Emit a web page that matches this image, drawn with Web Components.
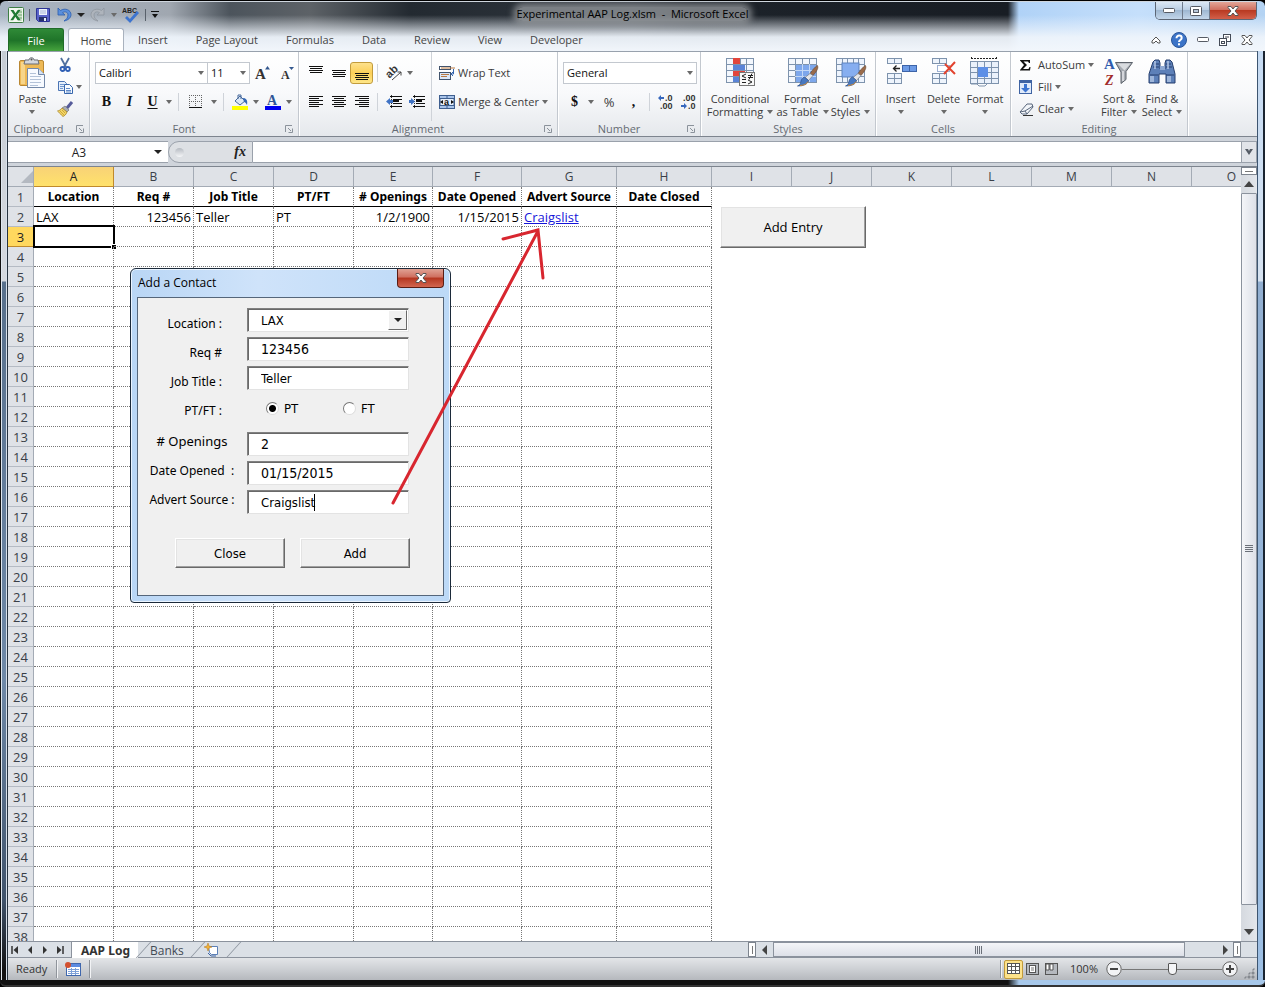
<!DOCTYPE html>
<html lang="en">
<head>
<meta charset="utf-8">
<title>Experimental AAP Log.xlsm - Microsoft Excel</title>
<style>
  html, body { margin: 0; height: 100%; overflow: hidden; background: #000; }
  body { font: 11px/14px "Open Sans", "Noto Sans", sans-serif; color: #3b3b3b; }
</style>
</head>
<body>
<excel-window></excel-window>
<script>
const BASE = `
  *, *::before, *::after { box-sizing: border-box; }
  :host { display: block; }
  :host([hidden]) { display: none; }
  button, input, select { font: inherit; color: inherit; margin: 0; padding: 0; border: 0; background: none; outline: 0; border-radius: 0; appearance: none; }
  button { display: inline-flex; align-items: center; justify-content: center; white-space: nowrap; }
`;
function define(name, css, html) {
  customElements.define(name, class extends HTMLElement {
    constructor() {
      super();
      this.attachShadow({ mode: 'open' });
    }
    connectedCallback() {
      if (this.shadowRoot.childNodes.length) return;
      const t = document.createElement('template');
      t.innerHTML = `<style>${BASE}${css}</style>${typeof html === 'function' ? html(this) : html}`;
      this.shadowRoot.append(t.content.cloneNode(true));
    }
  });
}

/* ---------- icons: [width, height, svg body] ---------- */
const lines = (arr) => arr.map(([x, y, w]) => `<rect x="${x}" y="${y}" width="${w}" height="1" fill="#111"/>`).join('');
const cells = (x, y, w, h, c, r, fill = '#eef4fc', stroke = '#7e93ad') => {
  let s = `<rect x="${x + .5}" y="${y + .5}" width="${w}" height="${h}" fill="${fill}" stroke="${stroke}"/>`;
  for (let i = 1; i < c; i++) s += `<path d="M${x + .5 + Math.round(i * w / c)} ${y}v${h}" stroke="${stroke}"/>`;
  for (let i = 1; i < r; i++) s += `<path d="M${x} ${y + .5 + Math.round(i * h / r)}h${w}" stroke="${stroke}"/>`;
  return s;
};
const BRUSH = `<path d="M30.500 8.500c1 2 0 4-2 7l-2.500 3-3-2 3-4c2-2 3-3.500 4.500-4z" fill="#9b6b4a" stroke="#5f4634" stroke-width=".6"/><path d="M23 16.500l3 2-4.500 5-3.500-3z" fill="#e4e6ea" stroke="#777c85" stroke-width=".7"/><path d="M17.500 20l4 3.500c-1 4-5 5.500-11 5.500 3-1 3-3 3.500-5 .5-2 2-3.500 3.500-4z" fill="#4878c0" stroke="#2c4f8a" stroke-width=".7"/><path d="M13 28.500c4-.3 7-1.500 8-4" stroke="#c98a3c" fill="none"/>`;
const ICONS = {
  excel: [16, 16, `<rect x=".5" y=".5" width="15" height="15" rx="1" fill="#f3f8f0" stroke="#3e7f45"/><rect x="10" y="2" width="4" height="12" fill="#cfe3cc"/><path d="M10 5h4M10 8h4M10 11h4" stroke="#6ea56f"/><path d="M2.500 3h3l2 3.300L9.700 3h2.800L9 8l3.700 5.200H9.600L7.400 9.700l-2.200 3.500H2.300L6 8z" fill="#1f7a33"/>`],
  save: [16, 16, `<path d="M1.500 1.500h13v13h-11l-2-2z" fill="#5a63c8" stroke="#2d3596"/><rect x="4" y="2" width="8" height="6" fill="#eef2fb"/><path d="M5 4h6M5 6h6" stroke="#a9b4d6"/><rect x="4" y="10" width="8" height="4" fill="#27306b"/><rect x="9" y="11" width="2" height="3" fill="#e8ecf8"/>`],
  undo: [16, 16, `<path d="M2 1v7h7L6.500 5.700C9 4 12 5 12 8c0 3-2 4.500-4 6 4-.8 7-3 7-6.500C15 3 9 .500 4.500 3.500z" fill="#5a8fdc" stroke="#2a5cae" stroke-width=".8"/>`],
  redo: [16, 16, `<path d="M14 1v7H7l2.500-2.300C7 4 4 5 4 8c0 3 2 4.500 4 6-4-.8-7-3-7-6.500C1 3 7 .500 11.500 3.500z" fill="#aeb4bc" stroke="#8e959e" stroke-width=".8"/>`],
  spell: [18, 18, `<text x="0" y="7" font-size="7" font-weight="bold" font-family="Liberation Sans" fill="#222">ABC</text><path d="M4 11l4 4 8-9" fill="none" stroke="#3d74cf" stroke-width="2.800"/>`],
  custom: [8, 8, `<path d="M0 .5h8" stroke="#111"/><path d="M1 3h6L4 7z" fill="#111"/>`],
  down: [6, 4, `<path d="M0 0h6L3 4z" fill="#6a6a6a"/>`],
  downBlack: [8, 4, `<path d="M0 0h8L4 4z" fill="#222"/>`],
  launcher: [8, 8, `<path d="M.5 7V.5H7" fill="none" stroke="#8b929b"/><path d="M3 3l3 3M7.500 3.500v4h-4" fill="none" stroke="#8b929b"/>`],
  paste: [32, 32, `<rect x="2.500" y="3.500" width="24" height="25" rx="1.500" fill="#eeb955" stroke="#b98732"/><rect x="4" y="5" width="4" height="22" fill="#f7d58a"/><path d="M8 3h4c0-3 5-3 5 0h4l1 4H7z" fill="#d5d8dd" stroke="#686d75"/><circle cx="14.500" cy="2.500" r="1" fill="#555"/><path d="M10.500 11.500h11l6 6v13h-17z" fill="#f7faff" stroke="#7388a8"/><path d="M21.500 11.500v6h6" fill="#d6e2f2" stroke="#7388a8"/><path d="M13 16.500h6M13 19.500h11M13 22.500h11M13 25.500h11M13 28.500h8" stroke="#b3c2d8"/>`],
  cut: [16, 16, `<path d="M4 1l5 9M12 1L7 10" stroke="#50709f" stroke-width="1.800"/><circle cx="5.500" cy="12" r="2" fill="none" stroke="#2f5fb4" stroke-width="1.800"/><circle cx="10.800" cy="12" r="2" fill="none" stroke="#2f5fb4" stroke-width="1.800"/>`],
  copy: [16, 16, `<path d="M1.500 2.500h6l2 2v7h-8z" fill="#e4eefb" stroke="#4a74b4"/><path d="M3 5.500h4M3 7.500h4M3 9.500h3" stroke="#6f96cf"/><path d="M7.500 5.500h5l3 3v6h-8z" fill="#f6faff" stroke="#3766ad"/><path d="M9 9.500h4M9 11.500h5M9 13h5" stroke="#5f89c8"/>`],
  painter: [16, 16, `<path d="M15 1l-5 6" stroke="#555b9a" stroke-width="3"/><path d="M8 5l4 4-2 2-5-4z" fill="#a8adb6" stroke="#666" stroke-width=".6"/><path d="M5 7l5 4c-1 3-3 4-4 4.500C4 14 2 11 .500 10 2 9.500 4 9 5 7z" fill="#f3d565" stroke="#a88728" stroke-width=".8"/><path d="M3 10l4 4M5 9l3 3" stroke="#b9942f" stroke-width=".7"/>`],
  grow: [16, 16, `<text x="0" y="14" font-size="15" font-weight="bold" font-family="Liberation Serif" fill="#333">A</text><path d="M10 4.500h5L12.500 1z" fill="#34588f"/>`],
  shrink: [14, 16, `<text x="0" y="14" font-size="12" font-weight="bold" font-family="Liberation Serif" fill="#333">A</text><path d="M8 2h5L10.500 5z" fill="#34588f"/>`],
  borders: [14, 14, `<path d="M.5 0v12M6.500 0v12M12.500 0v12M0 .5h13M0 6.500h13" stroke="#666" stroke-dasharray="1 1"/><path d="M0 12.500h13" stroke="#111"/>`],
  fill: [16, 16, `<path d="M3 7l5-5 5 5-5 4z" fill="#dce8f6" stroke="#47699b"/><path d="M6 5V1h3v4" fill="none" stroke="#47699b"/><path d="M11 4c3 0 5 2 4 7-1-2-2-3-3-3z" fill="#3769b5"/><rect x="0" y="12" width="16" height="4" fill="#ffff00"/>`],
  fontcolor: [16, 16, `<text x="2" y="11" font-size="14" font-weight="bold" font-family="Liberation Serif" fill="#2f5597">A</text><rect x="0" y="12" width="16" height="4" fill="#0000f0"/>`],
  atop: [14, 14, lines([[0, 0, 14], [1, 2, 12], [0, 4, 14], [1, 6, 12]])],
  amid: [14, 14, lines([[0, 4, 14], [1, 6, 12], [0, 8, 14], [1, 10, 12]])],
  abot: [14, 14, lines([[0, 7, 14], [1, 9, 12], [0, 11, 14], [1, 13, 12]])],
  aleft: [14, 14, lines([[0, 1, 14], [0, 3, 10], [0, 5, 14], [0, 7, 10], [0, 9, 14], [0, 11, 10]])],
  acenter: [14, 14, lines([[0, 1, 14], [2, 3, 10], [0, 5, 14], [2, 7, 10], [0, 9, 14], [2, 11, 10]])],
  aright: [14, 14, lines([[0, 1, 14], [4, 3, 10], [0, 5, 14], [4, 7, 10], [0, 9, 14], [4, 11, 10]])],
  orient: [18, 16, `<text x="1" y="11" transform="rotate(-45 6 8)" font-size="11" font-weight="bold" font-family="Liberation Sans" fill="#333">ab</text><path d="M7 15l9-8M12.500 7H16v3.500" fill="none" stroke="#444"/>`],
  outdent: [16, 14, lines([[4, 1, 12], [7, 4, 9], [7, 6, 6], [7, 8, 9], [4, 11, 12]]) + `<rect x="7" y="5" width="6" height="2" fill="#111"/><path d="M5.500 0v14" stroke="#333" stroke-dasharray="1 1"/><path d="M0 6.500L4 3v2h3v3H4v2z" fill="#3f72c4"/>`],
  indent: [16, 14, lines([[4, 1, 12], [7, 4, 9], [7, 6, 6], [7, 8, 9], [4, 11, 12]]) + `<rect x="7" y="5" width="6" height="2" fill="#111"/><path d="M5.500 0v14" stroke="#333" stroke-dasharray="1 1"/><path d="M6 6.500L2 3v2H0v3h2v2z" fill="#3f72c4"/>`],
  wrap: [16, 16, `<rect x=".5" y="1.500" width="11" height="3" fill="#fff" stroke="#41536c"/><path d="M2 3h14" stroke="#bb7a43"/><rect x=".5" y="7.500" width="11" height="7" fill="#dbe7f8" stroke="#41536c"/><path d="M2 9.500h8M2 11.500h6" stroke="#bb7a43"/><path d="M14.500 4v5h-2M14 7l-2 2 2 2" fill="none" stroke="#3464ad"/>`],
  merge: [16, 16, `<rect x=".5" y="1.500" width="15" height="13" fill="#a9c4ea" stroke="#3f5f8f"/><path d="M8 1v3M8 12v3" stroke="#3f5f8f"/><rect x="1" y="4.500" width="14" height="7" fill="#e6effb" stroke="#3f5f8f"/><path d="M1 8l3-2v4zM15 8l-3-2v4z" fill="#111"/><text x="5" y="11" font-size="9" font-weight="bold" font-family="Liberation Sans" fill="#111">a</text>`],
  incdec: [16, 16, `<text x="7" y="7" font-size="9" font-weight="bold" font-family="Liberation Sans" fill="#333">.0</text><text x="2" y="15" font-size="9" font-weight="bold" font-family="Liberation Sans" fill="#333">.00</text><path d="M0 4l3-3v2h3v2H3v2z" fill="#3768bd"/>`],
  decdec: [16, 16, `<text x="2" y="7" font-size="9" font-weight="bold" font-family="Liberation Sans" fill="#333">.00</text><text x="7" y="15" font-size="9" font-weight="bold" font-family="Liberation Sans" fill="#333">.0</text><path d="M6 12L3 9v2H0v2h3v2z" fill="#3768bd"/>`],
  condfmt: [32, 32, cells(2, 1, 27, 24, 4, 4, '#f3f7fd') + `<rect x="9" y="1" width="7" height="6" fill="#e2453c"/><rect x="9" y="8" width="12" height="5" fill="#5a84d8"/><rect x="9" y="14" width="12" height="5" fill="#e2453c"/><rect x="9" y="20" width="7" height="5" fill="#5a84d8"/><rect x="15.500" y="15.500" width="15" height="13" fill="#f8f8f8" stroke="#777"/><path d="M22 17l-4 2 4 2M18 22.500h4M24 18.500h5M24 20.500h5M28 16.500l-3 6M24 23l4 2-4 2M18 25.500h4" stroke="#222" fill="none"/>`],
  fmttable: [32, 32, cells(1, 1, 28, 24, 4, 4, '#f3f7fd') + `<rect x="9" y="8" width="20" height="17" fill="#7da7ec"/><path d="M15.500 7v18M22.500 7v18M8 13.500h21M8 19.500h21" stroke="#c3d8f6"/>` + BRUSH],
  cellstyle: [32, 32, cells(1, 1, 28, 24, 5, 4, '#eef4fd') + `<rect x="7" y="6" width="17" height="14" fill="#86aef0" stroke="#5d83c0"/>` + BRUSH],
  insert: [32, 32, cells(2, 1, 14, 5, 2, 1) + cells(2, 16, 14, 10, 2, 2) + cells(17, 8, 14, 6, 2, 1, '#6d9be6', '#3d64a8') + `<path d="M15 11.500H9M11.500 8.500l-3 3 3 3" stroke="#222" fill="none" stroke-width="1.300"/>`],
  delete: [32, 32, cells(4, 1, 14, 5, 2, 1) + cells(4, 16, 14, 10, 2, 2) + `<rect x="9.500" y="8.500" width="12" height="6" fill="#fff" stroke="#3d64a8" stroke-dasharray="1 1"/><path d="M17 7l10 10M27 5L16 17" stroke="#e2432f" stroke-width="2"/>`],
  format: [32, 32, `<path d="M2 1.500h26M2.500 0v3M27.500 0v3" stroke="#222" stroke-dasharray="2 1"/>` + cells(1, 4, 28, 22, 4, 4, '#eaf1fb') + `<rect x="9" y="10" width="10" height="10" fill="#5d8fe6"/><path d="M2 27h6l2 2h6l2-2" fill="none" stroke="#7e93ad"/>`],
  sum: [12, 12, `<path d="M1 1h10v3h-1l-1-1.500H4.500L8 6l-4 4h5.500l1-2h1l-.5 3.500H1V11l4-5-4-4.500z" fill="#111"/>`],
  fillcell: [14, 16, `<rect x=".5" y="1.500" width="12" height="13" fill="#dfeafa" stroke="#3e63a3"/><path d="M1 3h12" stroke="#3e63a3" stroke-width="2"/><path d="M5 5h3v4h3l-4.500 4.500L2 9h3z" fill="#3c74d0"/>`],
  clear: [16, 14, `<path d="M1 10L8 2h5l1 3-6 7H3z" fill="#f2f5f9" stroke="#59677c"/><path d="M1 10l5-1 8-5M6 9l2 3" fill="none" stroke="#59677c"/><path d="M4 13.500h10" stroke="#333"/>`],
  sort: [32, 32, `<path d="M12.500 5.500h17l-6.500 9v8l-5 4V15z" fill="#a6abb2" stroke="#5c626b"/><path d="M14.500 6.500h13l-6 7" fill="#d9dce0"/><path d="M20 14v10" stroke="#e3e5e8" stroke-width="1.500"/><text x="1" y="12" font-size="15" font-weight="bold" font-family="Liberation Serif" fill="#2e5cae">A</text><text x="2" y="28" font-size="14" font-weight="bold" font-style="italic" font-family="Liberation Serif" fill="#a12a2a">Z</text>`],
  find: [32, 32, `<path d="M7 5l2-2h4l1 3v6h5V6l1-3h4l2 2 3 12v9h-9v-9h-7v9H3v-9z" fill="#5d80b8" stroke="#263f6e"/><path d="M4 18h8M20 18h8M8 7h5M20 7h5M7 10h6M20 10h6" stroke="#263f6e"/><path d="M5 19v6M7 19v6M22 19v6M24 19v6M9 4v8M22 4v8" stroke="#b5c8e6" stroke-width="1.500"/><rect x="14" y="9" width="5" height="4" fill="#8fa9d2"/>`],
  caret: [10, 8, `<path d="M1 5l4-4 4 4v2H7L5 5 3 7H1z" fill="#fff" stroke="#555"/>`],
  help: [16, 16, `<circle cx="8" cy="8" r="7.500" fill="#3c74c8" stroke="#2a5599"/><path d="M5.500 6.200c0-3.600 5.200-3.200 5.200-.3C10.700 8 8 8 8 10" fill="none" stroke="#fff" stroke-width="2"/><rect x="7" y="11.300" width="2" height="2" fill="#fff"/>`],
  wmin: [12, 6, `<rect x=".5" y=".5" width="11" height="4" rx="1" fill="#fff" stroke="#565b64"/>`],
  wmax: [12, 10, `<rect x=".5" y=".5" width="11" height="9" rx="1" fill="#fff" stroke="#565b64"/><rect x="3.500" y="3.500" width="5" height="3" fill="#b9c8da" stroke="#565b64"/>`],
  wclose: [12, 10, `<path d="M1 .500h3L6 3l2-2.500h3v1L8 5l3 3.500v1H8L6 7 4 9.500H1v-1L4 5 1 1.500z" fill="#fff" stroke="#555"/>`],
  restore: [12, 12, `<rect x="4.500" y=".5" width="7" height="7" fill="#fff" stroke="#444b57"/><rect x=".5" y="4.500" width="7" height="7" fill="#fff" stroke="#444b57"/><rect x="2.500" y="7.500" width="3" height="2" fill="#fff" stroke="#444b57"/><path d="M6 3h4" stroke="#444b57"/>`],
  chevron: [8, 6, `<path d="M0 0h3l1 2 1-2h3L4 6z" fill="#555c66"/>`],
  up: [10, 6, `<path d="M5 0l5 6H0z" fill="#444"/>`],
  dn: [10, 6, `<path d="M5 6l5-6H0z" fill="#444"/>`],
  lt: [6, 10, `<path d="M0 5l5-5v10z" fill="#444"/>`],
  rt: [6, 10, `<path d="M6 5L1 0v10z" fill="#444"/>`],
  navfirst: [8, 8, `<path d="M1 0v8" stroke="#333" stroke-width="1.500"/><path d="M2.500 4L7 0v8z" fill="#333"/>`],
  navprev: [8, 8, `<path d="M2 4l4-4v8z" fill="#333"/>`],
  navnext: [8, 8, `<path d="M6 4L2 0v8z" fill="#333"/>`],
  navlast: [8, 8, `<path d="M7 0v8" stroke="#333" stroke-width="1.500"/><path d="M5.500 4L1 0v8z" fill="#333"/>`],
  newsheet: [16, 14, `<path d="M4.500 3.500h9v8h-6l-2-2z" fill="#fff" stroke="#5b7fb6"/><path d="M4 10l3 3h5" fill="none" stroke="#3c62a3"/><path d="M4 0l1 3 3 1-3 1-1 3-1-3-3-1 3-1z" fill="#f4b234" stroke="#b5761a" stroke-width=".5"/>`],
  macro: [16, 14, `<rect x="1.500" y="1.500" width="14" height="12" fill="#fff" stroke="#3f67ad"/><rect x="2" y="2" width="13" height="3" fill="#5c8be0"/><path d="M3 7.500h11M3 9.500h11M3 11.500h11M6.500 6v7M10.500 6v7" stroke="#7da0d8"/><circle cx="3" cy="3" r="3" fill="#d3502f"/>`],
  vnormal: [14, 12, cells(0, 0, 12, 10, 3, 3, '#fff', '#555')],
  vlayout: [14, 12, `<rect x=".5" y=".5" width="12" height="11" fill="#b5b9bf" stroke="#555"/><rect x="3.500" y="2.500" width="6" height="7" fill="#fff" stroke="#555"/><path d="M5 5h3M5 7h3" stroke="#777"/>`],
  vbreak: [14, 12, `<rect x=".5" y=".5" width="12" height="11" fill="#b5b9bf" stroke="#555"/><path d="M1 1h3v6H1zM5 1h3v6H5z" fill="#fff" stroke="#555"/>`],
  minus: [16, 16, `<circle cx="8" cy="8" r="7.200" fill="#f2f3f5" stroke="#666"/><path d="M4 8h8" stroke="#444" stroke-width="2"/>`],
  plus: [16, 16, `<circle cx="8" cy="8" r="7.200" fill="#f2f3f5" stroke="#666"/><path d="M4 8h8M8 4v8" stroke="#444" stroke-width="2"/>`],
};
define('xl-icon', `:host { display: inline-block; flex: none; line-height: 0; } svg { display: block; overflow: visible; }`, (el) => {
  const [w, h, body] = ICONS[el.getAttribute('name')];
  return `<svg width="${w}" height="${h}" viewBox="0 0 ${w} ${h}" fill="none" aria-hidden="true">${body}</svg>`;
});
const icon = (n) => `<xl-icon name="${n}"></xl-icon>`;
const btn = (n, label) => `<button aria-label="${label}">${icon(n)}</button>`;

/* ---------- title bar ---------- */
define('title-bar', `
  :host { display: grid; grid-template-columns: 1fr auto 1fr; height: 27px; border-top: 1px solid #cfd6de; }
  .quick { display: flex; align-items: center; height: 26px; gap: 5px; }
  i { width: 1px; height: 12px; background: #59616b; }
  h1 { align-self: start; margin: 5px 0 0; font: 11px/14px "Open Sans", sans-serif; color: #000; background: rgba(150,154,158,.75); box-shadow: 0 0 6px 4px rgba(150,154,158,.75); border-radius: 6px; white-space: pre; }
  .win { justify-self: end; display: flex; height: 18px; border: 1px solid #5c6675; border-top: 0; border-radius: 0 0 5px 5px; overflow: hidden; }
  .win button { width: 27px; background: linear-gradient(#dbe8f5, #b7cce2 50%, #9fb8d2 50%, #c3d6ea); border-right: 1px solid #6f7b8c; }
  .win .close { width: 46px; border: 0; background: linear-gradient(#e3a698, #d07060 45%, #b93a22 50%, #d3604a); }
`, `<div class="quick">${icon('excel')}<i></i>${btn('save', 'Save')}${btn('undo', 'Undo')}${btn('downBlack', 'Undo list')}${btn('redo', 'Redo')}${btn('down', 'Redo list')}${btn('spell', 'Spelling')}<i></i>${btn('custom', 'Customize toolbar')}</div>
<h1>Experimental AAP Log.xlsm  -  Microsoft Excel</h1>
<div class="win">${btn('wmin', 'Minimize')}${btn('wmax', 'Maximize')}<button class="close" aria-label="Close window">${icon('wclose')}</button></div>`);

/* ---------- ribbon tabs ---------- */
define('ribbon-tabs', `
  :host { display: flex; height: 24px; align-items: stretch; }
  button { padding: 0 14px; color: #444; }
  .file { width: 56px; margin-right: 4px; color: #fff; border: 1px solid #1f6b28; border-bottom: 0; border-radius: 3px 3px 0 0; background: linear-gradient(#2f8a37, #1f7429 50%, #4aa83f); }
  .on { width: 56px; padding: 0; background: #fff; border: 1px solid #a9b2be; border-bottom: 0; border-radius: 3px 3px 0 0; }
  nav { display: flex; flex: 1; }
  .tools { display: flex; align-items: center; gap: 10px; padding-right: 4px; }
  .tools button { padding: 0; }
`, `<nav><button class="file">File</button><button class="on">Home</button>${['Insert', 'Page Layout', 'Formulas', 'Data', 'Review', 'View', 'Developer'].map((t) => `<button>${t}</button>`).join('')}</nav>
<div class="tools">${btn('caret', 'Collapse ribbon')}${btn('help', 'Help')}${btn('wmin', 'Minimize workbook')}${btn('restore', 'Restore workbook')}${btn('wclose', 'Close workbook')}</div>`);

/* ---------- ribbon parts ---------- */
define('ribbon-group', `
  :host { display: flex; flex-direction: column; flex: none; border-right: 1px solid #c3c8cf; box-shadow: 1px 0 #fff; }
  .body { flex: 1; display: flex; min-height: 0; }
  footer { display: flex; height: 15px; align-items: center; padding: 0 5px; color: #666b73; }
  footer span { flex: 1; text-align: center; }
  :host([launcher]) footer span { padding-right: 12px; }
`, (el) => `<div class="body"><slot></slot></div><footer><span>${el.getAttribute('label')}</span>${el.hasAttribute('launcher') ? btn('launcher', el.getAttribute('label') + ' options') : ''}</footer>`);

define('large-button', `
  :host { display: block; flex: none; }
  button { display: flex; flex-direction: column; width: 100%; justify-content: flex-start; padding-top: 5px; line-height: 13px; }
  .text { display: flex; flex-direction: column; align-items: center; margin-top: 3px; }
  .last { display: flex; align-items: center; gap: 4px; height: 13px; }
`, (el) => {
  const [a, b = ''] = el.getAttribute('label').split('|');
  return `<button>${icon(el.getAttribute('icon'))}<span class="text"><span>${a}</span><span class="last">${b ? `<span>${b}</span>` : ''}${icon('down')}</span></span></button>`;
});

define('combo-box', `
  :host { display: block; position: relative; height: 22px; }
  select { width: 100%; height: 100%; border: 1px solid #c3c8cf; background: #fff; color: #111; padding-left: 3px; line-height: 20px; }
  xl-icon { position: absolute; right: 4px; top: 9px; pointer-events: none; }
`, (el) => `<select aria-label="${el.getAttribute('label')}"><option>${el.getAttribute('value')}</option></select>${icon('down')}`);

define('excel-ribbon', `
  :host { display: flex; height: 86px; background: linear-gradient(#fff, #f8f9fb 50%, #e5e8ec); border-top: 1px solid #98a1ad; border-bottom: 1px solid #7d848e; }
  .two { display: flex; flex-direction: column; gap: 7px; padding: 10px 0 0 5px; }
  .row { display: flex; align-items: center; height: 22px; }
  .row button { width: 23px; height: 22px; flex: none; }
  .row .dd { width: 10px; }
  .row .wide { width: 26px; }
  .row .fit { width: auto; gap: 3px; padding-right: 6px; }
  .row i { width: 1px; height: 18px; margin: 0 4px; background: #cfd3d9; }
  .glyph { font: bold 14px "Liberation Serif", serif; color: #111; }
  .glyph em { font-style: italic; } .glyph u { text-underline-offset: 2px; }
  .on { border: 1px solid #c29b3b; border-radius: 3px; background: linear-gradient(#fde18c, #fccf58 50%, #fee688); }
  .stack { display: flex; flex-direction: column; align-items: flex-start; padding-top: 2px; }
  .stack button { height: 22px; gap: 3px; }
  .stack xl-icon:first-child { min-width: 16px; }
  .rule { border-left: 1px solid #cfd3d9; padding-left: 7px; }
  .clip { width: 82px; } .font { width: 209px; } .align { width: 259px; } .num { width: 143px; }
  .styles { width: 175px; } .cells { width: 135px; } .edit { width: 177px; }
`, `
<ribbon-group class="clip" label="Clipboard" launcher>
  <large-button style="width:49px" icon="paste" label="Paste"></large-button>
  <div class="stack">${btn('cut', 'Cut')}<button aria-label="Copy">${icon('copy')}${icon('down')}</button>${btn('painter', 'Format Painter')}</div>
</ribbon-group>
<ribbon-group class="font" label="Font" launcher>
  <div class="two">
    <div class="row"><combo-box style="width:113px" label="Font" value="Calibri"></combo-box><combo-box style="width:43px;margin-left:-1px" label="Font size" value="11"></combo-box><button class="wide" aria-label="Grow font">${icon('grow')}</button><button aria-label="Shrink font">${icon('shrink')}</button></div>
    <div class="row"><button class="glyph">B</button><button class="glyph"><em>I</em></button><button class="glyph"><u>U</u></button><button class="dd" aria-label="Underline list">${icon('down')}</button><i></i><button class="wide" aria-label="Borders">${icon('borders')}</button><button class="dd" aria-label="Border list">${icon('down')}</button><i></i><button aria-label="Fill color">${icon('fill')}</button><button class="dd" aria-label="Fill list">${icon('down')}</button><button aria-label="Font color">${icon('fontcolor')}</button><button class="dd" aria-label="Font color list">${icon('down')}</button></div>
  </div>
</ribbon-group>
<ribbon-group class="align" label="Alignment" launcher>
  <div class="two" style="width:132px">
    <div class="row">${btn('atop', 'Top align')}${btn('amid', 'Middle align')}<button class="on" aria-label="Bottom align">${icon('abot')}</button><i></i>${btn('orient', 'Orientation')}<button class="dd" aria-label="Orientation list">${icon('down')}</button></div>
    <div class="row">${btn('aleft', 'Align left')}${btn('acenter', 'Center')}${btn('aright', 'Align right')}<i></i>${btn('outdent', 'Decrease indent')}${btn('indent', 'Increase indent')}</div>
  </div>
  <div class="two rule">
    <div class="row"><button class="fit">${icon('wrap')}Wrap Text</button></div>
    <div class="row"><button class="fit">${icon('merge')}Merge &amp; Center ${icon('down')}</button></div>
  </div>
</ribbon-group>
<ribbon-group class="num" label="Number" launcher>
  <div class="two">
    <div class="row"><combo-box style="width:134px" label="Number format" value="General"></combo-box></div>
    <div class="row"><button class="glyph">$</button><button class="dd" aria-label="Currency list">${icon('down')}</button><button class="wide" style="font-size:13px">%</button><button class="glyph">,</button><i></i>${btn('incdec', 'Increase decimal')}${btn('decdec', 'Decrease decimal')}</div>
  </div>
</ribbon-group>
<ribbon-group class="styles" label="Styles">
  <large-button style="width:78px" icon="condfmt" label="Conditional|Formatting"></large-button>
  <large-button style="width:47px" icon="fmttable" label="Format|as Table"></large-button>
  <large-button style="width:49px" icon="cellstyle" label="Cell|Styles"></large-button>
</ribbon-group>
<ribbon-group class="cells" label="Cells">
  <large-button style="width:49px" icon="insert" label="Insert"></large-button>
  <large-button style="width:37px" icon="delete" label="Delete"></large-button>
  <large-button style="width:46px" icon="format" label="Format"></large-button>
</ribbon-group>
<ribbon-group class="edit" label="Editing">
  <div class="stack" style="width:86px;padding-left:8px"><button>${icon('sum')}AutoSum ${icon('down')}</button><button>${icon('fillcell')}Fill ${icon('down')}</button><button>${icon('clear')}Clear ${icon('down')}</button></div>
  <large-button style="width:44px" icon="sort" label="Sort &amp;|Filter"></large-button>
  <large-button style="width:42px" icon="find" label="Find &amp;|Select"></large-button>
</ribbon-group>`);

/* ---------- formula bar ---------- */
define('formula-bar', `
  :host { display: flex; height: 29px; padding: 4px 0 3px; background: #cfd4db; }
  .box { display: flex; flex: none; width: 160px; background: #fff; border: 1px solid #9aa1ab; border-width: 1px 0; align-items: center; }
  .box input { width: 142px; text-align: center; font: 12px "Open Sans", sans-serif; color: #222; }
  .box button { width: 16px; }
  .fx { display: flex; align-items: center; justify-content: space-between; width: 85px; flex: none; padding: 0 6px; background: #dde0e4; border: 1px solid #9aa1ab; border-radius: 11px 0 0 11px; font: italic bold 14px "Liberation Serif", serif; color: #222; }
  .knob { width: 9px; height: 9px; border-radius: 5px; background: linear-gradient(#b5bac1, #f5f6f8); }
  .entry { flex: 1; min-width: 0; background: #fff; border: 1px solid #9aa1ab; border-width: 1px 0; }
  .more { width: 16px; background: #e1e4e9; border: 1px solid #9aa1ab; }
`, `<div class="box"><input aria-label="Name box" value="A3">${btn('downBlack', 'Names')}</div>
<div class="fx"><span class="knob"></span><span>fx</span></div><input class="entry" aria-label="Formula"><button class="more" aria-label="Expand formula bar">${icon('chevron')}</button>`);

/* ---------- worksheet ---------- */
const COLS = [['A', 80], ['B', 80], ['C', 80], ['D', 80], ['E', 79], ['F', 89], ['G', 95], ['H', 95], ['I', 80], ['J', 80], ['K', 80], ['L', 80], ['M', 80], ['N', 80], ['O', 80]];
const HEAD = ['Location', 'Req #', 'Job Title', 'PT/FT', '# Openings', 'Date Opened', 'Advert Source', 'Date Closed'];
const DATA = ['LAX', '123456', 'Teller', 'PT', '1/2/1900', '1/15/2015', '<a href="#">Craigslist</a>', ''];
const RIGHT = [1, 4, 5];
define('sheet-grid', `
  :host { display: block; position: relative; overflow: hidden; background: #fff; }
  table { width: 1264px; table-layout: fixed; border-collapse: separate; border-spacing: 0; }
  th, td { height: 20px; padding: 0; overflow: visible; white-space: nowrap; }
  thead th, tbody th { font: 13px/18px "Open Sans", sans-serif; color: #3a3f47; background: #dfe2e7; border-right: 1px solid #a4abb5; border-bottom: 1px solid #a4abb5; }
  thead th { font-size: 12px; }
  tbody th { padding-top: 1px; border-bottom-color: #b5bbc4; }
  th.on { background: #ffd85e; border-color: #c08a2c; color: #222; }
  thead th.on { background: linear-gradient(#f8d277, #ffe26b); }
  .corner { text-align: right; }
  .corner::after { content: ""; display: inline-block; border: 6px solid; border-color: transparent #b4b9c1 #b4b9c1 transparent; vertical-align: middle; }
  td { position: relative; font: 13px/18px "Open Sans", sans-serif; color: #000; padding: 1px 2px 0; }
  td.g { border-right: 1px dotted #777; border-bottom: 1px dotted #777; }
  tr.h td.g { border-bottom: 1px solid #000; font: bold 12px/18px "Noto Sans", sans-serif; text-align: center; padding: 1px 0 0; }
  td.r { text-align: right; }
  a { color: #1515d8; }
  .sel::before { content: ""; position: absolute; inset: -2px -2px -2px -1px; border: 2px solid #000; }
  .sel::after { content: ""; position: absolute; right: -3px; bottom: -3px; width: 5px; height: 5px; background: #000; border: 1px solid #fff; border-width: 1px 0 0 1px; }
`, () => {
  let rows = '';
  for (let r = 1; r <= 38; r++) {
    rows += `<tr class="${r === 1 ? 'h' : ''}"><th class="${r === 3 ? 'on' : ''}">${r}</th>`;
    COLS.forEach((c, i) => {
      const text = r === 1 ? HEAD[i] || '' : r === 2 ? DATA[i] || '' : '';
      rows += `<td class="${i < 8 ? 'g' : ''} ${r === 2 && RIGHT.includes(i) ? 'r' : ''} ${r === 3 && i === 0 ? 'sel' : ''}">${text}</td>`;
    });
    rows += '</tr>';
  }
  return `<table><colgroup><col style="width:26px">${COLS.map((c) => `<col style="width:${c[1]}px">`).join('')}</colgroup>
  <thead><tr><th class="corner"></th>${COLS.map((c, i) => `<th class="${i ? '' : 'on'}">${c[0]}</th>`).join('')}</tr></thead><tbody>${rows}</tbody></table><slot></slot>`;
});

define('form-button', `
  button { width: 100%; height: 100%; background: #f0f0f0; color: #000; border: 1px solid; border-color: #fff #696969 #696969 #fff; box-shadow: inset -1px -1px #a0a0a0, inset 1px 1px #e3e3e3; font: inherit; }
`, `<button><slot></slot></button>`);

/* ---------- contact dialog ---------- */
define('contact-dialog', `
  :host { display: flex; flex-direction: column; width: 321px; border: 1px solid #1c2a3a; border-radius: 6px 6px 4px 4px; padding: 0 6px 6px; background: linear-gradient(90deg, #b9d6f5, #cfe3fa 40%, #bcd9f7); box-shadow: inset 0 0 0 1px #eaf4ff; font: 12px/15px "Noto Sans", sans-serif; color: #000; }
  header { display: flex; justify-content: space-between; height: 28px; }
  h2 { margin: 0; padding-left: 1px; font: 12px/28px "Open Sans", sans-serif; }
  .close { width: 47px; height: 19px; border: 1px solid #5a1d14; border-top: 0; border-radius: 0 0 4px 4px; background: linear-gradient(#e0a294, #cf6f5f 45%, #b43620 50%, #d26650); }
  form { height: 299px; background: #f0f0f0; border: 1px solid #55667a; padding: 10px 33px 0 8px; }
  fieldset { border: 0; margin: 0; padding: 0; display: grid; grid-template-columns: 92px 162px; column-gap: 9px; grid-auto-rows: 24px; row-gap: 5px; align-items: center; }
  .a label, .a .lab { text-align: right; padding: 6px 16px 0 0; }
  .b { margin-top: 13px; }
  .b label { text-align: center; padding-bottom: 6px; white-space: pre; }
  label.big { font-size: 13px; }
  .field { width: 100%; height: 24px; background: #fff; border: 1px solid; border-color: #808080 #e3e3e3 #e3e3e3 #808080; box-shadow: inset 1px 1px #696969; padding: 0 0 0 13px; font: 13px "DejaVu Sans Condensed", sans-serif; }
  .digits { font-size: 14px; }
  .pick { position: relative; }
  .pick span { position: absolute; right: 2px; top: 2px; width: 19px; height: 20px; display: flex; align-items: center; justify-content: center; background: #f0f0f0; border: 1px solid; border-color: #fff #696969 #696969 #fff; pointer-events: none; }
  .caret { background: linear-gradient(#000, #000) 66px 3px / 1px 17px no-repeat #fff; }
  .radios { display: grid; grid-template-columns: 77px 60px; padding-left: 19px; font: 13px "DejaVu Sans Condensed", sans-serif; }
  .radios label { display: flex; align-items: center; gap: 5px; padding: 3px 0 0; text-align: left; }
  input[type=radio] { width: 13px; height: 13px; border-radius: 50%; background: #fff; border: 1px solid; border-color: #777 #ddd #ddd #777; }
  input[type=radio]:checked { background: radial-gradient(#000 0 3px, #fff 4px); }
  .actions { display: grid; grid-template-columns: 110px 110px; gap: 15px; height: 30px; margin: 24px 0 0 29px; font: 13px "DejaVu Sans Condensed", sans-serif; }
`, `<header><h2>Add a Contact</h2><button class="close" aria-label="Close dialog">${icon('wclose')}</button></header>
<form onsubmit="return false">
  <fieldset class="a">
    <label for="loc">Location :</label><div class="pick"><select id="loc" class="field"><option>LAX</option></select><span>${icon('downBlack')}</span></div>
    <label for="req">Req #</label><input id="req" class="field digits" value="123456">
    <label for="job">Job Title :</label><input id="job" class="field" value="Teller">
    <div class="lab">PT/FT :</div><div class="radios"><label><input type="radio" name="t" checked>PT</label><label><input type="radio" name="t">FT</label></div>
  </fieldset>
  <fieldset class="b">
    <label for="open" class="big"># Openings</label><input id="open" class="field digits" value="2">
    <label for="date">Date Opened  :</label><input id="date" class="field digits" value="01/15/2015">
    <label for="src">Advert Source :</label><input id="src" class="field caret" value="Craigslist">
  </fieldset>
  <div class="actions"><form-button>Close</form-button><form-button>Add</form-button></div>
</form>`);

/* ---------- scroll bars ---------- */
define('scroll-column', `
  :host { display: flex; flex-direction: column; width: 16px; flex: none; align-items: stretch; background: linear-gradient(90deg, #d5d9df, #e3e6eb); }
  .split { height: 8px; border: 1px solid #7d848e; background: linear-gradient(#777, #777) center / 8px 1px no-repeat #fff; }
  button { height: 18px; }
  .thumb { flex: 1; margin-bottom: 18px; display: flex; align-items: center; justify-content: center; border: 1px solid #8b929d; border-radius: 1px; background: linear-gradient(90deg, #f4f5f8, #dde0e8); }
  .grip { width: 8px; height: 8px; background: repeating-linear-gradient(#6b7079 0 1px, transparent 1px 2px); }
`, `<div class="split"></div>${btn('up', 'Scroll up')}<div class="thumb"><span class="grip"></span></div>${btn('dn', 'Scroll down')}`);

define('sheet-footer', `
  :host { display: flex; height: 17px; background: #dbe0e6; border-top: 1px solid #8b929d; border-bottom: 1px solid #8b929d; }
  .nav { display: flex; width: 64px; align-items: center; justify-content: space-around; padding-right: 4px; border-right: 1px solid #8b929d; }
  .tabs { display: flex; flex: 1; }
  .tabs button { position: relative; height: 16px; padding: 0 14px 0 6px; font-size: 12px; line-height: 15px; color: #444b55; }
  .tabs button::before { content: ""; position: absolute; right: 0; top: 0; width: 1px; height: 16px; background: #8b929d; transform: skewX(-42deg); }
  .tabs .on { width: 72px; padding: 0 5px 0 0; background: linear-gradient(#fff, #fff) 0 0 / 66px 16px no-repeat; font: bold 12px/15px "Noto Sans", sans-serif; color: #333; }
  .scroll { display: flex; width: 509px; align-items: center; }
  .split { width: 8px; height: 15px; border: 1px solid #7d848e; background: linear-gradient(#777, #777) center / 1px 8px no-repeat #fff; }
  .scroll button { width: 17px; }
  .thumb { flex: 1; margin-right: 31px; height: 15px; display: flex; align-items: center; justify-content: center; border: 1px solid #8b929d; background: linear-gradient(#f4f5f8, #dde0e8); }
  .grip { width: 8px; height: 8px; background: repeating-linear-gradient(90deg, #6b7079 0 1px, transparent 1px 2px); }
  .end { width: 16px; }
`, `<div class="nav">${btn('navfirst', 'First sheet')}${btn('navprev', 'Previous sheet')}${btn('navnext', 'Next sheet')}${btn('navlast', 'Last sheet')}</div>
<div class="tabs"><button class="on">AAP Log</button><button>Banks</button><button aria-label="New sheet">${icon('newsheet')}</button></div>
<div class="scroll"><div class="split"></div>${btn('lt', 'Scroll left')}<div class="thumb"><span class="grip"></span></div>${btn('rt', 'Scroll right')}<div class="split"></div><div class="end"></div></div>`);

define('status-bar', `
  :host { display: flex; height: 22px; align-items: center; background: linear-gradient(#e3e5e8, #cdd0d4 50%, #b5b8bd); color: #333; padding: 0 0 0 8px; }
  .ready { margin-right: 9px; }
  i { width: 1px; height: 18px; margin-right: 8px; background: #8f949b; box-shadow: 1px 0 #f2f3f5; }
  .sp { flex: 1; }
  .views { display: flex; align-items: center; margin-right: 9px; }
  .views button { width: 19px; height: 19px; }
  .views .on { border: 1px solid #c29b3b; border-radius: 2px; background: #fde28a; }
  i.b { margin: 0 8px; }
  i.c { margin-right: 3px; }
  input { width: 100px; height: 16px; background: linear-gradient(#777, #777) 0 8px / 100% 1px no-repeat; }
  input::-webkit-slider-thumb { appearance: none; width: 9px; height: 12px; background: #f4f5f7; border: 1px solid #555; border-radius: 1px 1px 4px 4px; }
  .pct { margin-right: 8px; }
  .size { align-self: end; width: 12px; height: 12px; margin: 0 2px 1px 5px; background: radial-gradient(circle, #85898f 0 1px, transparent 2px) 0 0 / 4px 4px; clip-path: polygon(100% 0, 100% 100%, 0 100%); }
`, `<span class="ready">Ready</span><i></i>${btn('macro', 'Record macro')}<i class="b"></i><span class="sp"></span><i class="c"></i>
<div class="views"><button class="on" aria-label="Normal">${icon('vnormal')}</button>${btn('vlayout', 'Page layout')}${btn('vbreak', 'Page break')}</div>
<span class="pct">100%</span>${btn('minus', 'Zoom out')}<input type="range" aria-label="Zoom" value="51">${btn('plus', 'Zoom in')}<span class="size"></span>`);

/* ---------- window ---------- */
define('excel-window', `
  :host { display: flex; flex-direction: column; height: 100vh; }
  .top { flex: none; padding: 0 8px; border-top: 1px solid #000; height: 51px; border-radius: 6px 6px 0 0; overflow: hidden;
    background: linear-gradient(rgba(238,244,251,0) 14px, rgba(238,244,251,.35) 22px, rgba(238,244,251,.95) 36px, #f3f7fc 52px),
      linear-gradient(90deg, #a9b5c3, #a0a7b0 170px, #4c545c 230px, #5d6267 310px, #232a31 410px, #30363e 50%, #1d232a 55%, #181d24 calc(100% - 257px), #b0d2f7 calc(100% - 246px), #c5dffb 90%, #b4d3f3); }
  .mid { flex: 1; display: flex; min-height: 0; }
  .edge { width: 8px; flex: none; }
  .left { background: linear-gradient(90deg, #111 1px, #dfe6ee 1px 2px, transparent 2px 6px, #d8e0ea 6px 7px, #26323f 7px), linear-gradient(#c6ccd4, #d5d9df 230px, #58708c 231px, #6f89a8 calc(100% - 300px), #40536b calc(100% - 80px), #111 calc(100% - 10px)); }
  .right { background: linear-gradient(90deg, #3d5570 1px, transparent 1px 6px, #1a2430 6px), linear-gradient(#c6dbf3, #d6e2f0 230px, #91aed0 231px, #9dbfe4); }
  main { flex: 1; min-width: 0; display: flex; flex-direction: column; }
  .sheet { flex: 1; display: flex; min-height: 0; border-top: 1px solid #7d848e; }
  sheet-grid { flex: 1; min-width: 0; }
  .bottom { flex: none; height: 7px; border-bottom: 2px solid #333; background: linear-gradient(90deg, #111 calc(100% - 257px), #a7c8ea calc(100% - 246px)); border-radius: 0 0 6px 6px; }
  form-button.add { position: absolute; left: 712px; top: 39px; width: 146px; height: 42px; font: 13px "Open Sans", sans-serif; }
  contact-dialog { position: absolute; left: 122px; top: 101px; }
  .arrow { position: absolute; left: 382px; top: 58px; }
`, `<div class="top"><title-bar></title-bar><ribbon-tabs></ribbon-tabs></div>
<div class="mid"><div class="edge left"></div>
<main><excel-ribbon></excel-ribbon><formula-bar></formula-bar>
<div class="sheet"><sheet-grid>
  <form-button class="add">Add Entry</form-button>
  <contact-dialog></contact-dialog>
  <svg class="arrow" width="160" height="284" viewBox="0 0 160 284" fill="none" stroke="#d8262f" stroke-width="3" stroke-linecap="round" aria-hidden="true"><path d="M3 278L148 6M113 14l35-9 5 48"/></svg>
</sheet-grid><scroll-column></scroll-column></div>
<sheet-footer></sheet-footer><status-bar></status-bar></main>
<div class="edge right"></div></div><div class="bottom"></div>`);
</script>
</body>
</html>
